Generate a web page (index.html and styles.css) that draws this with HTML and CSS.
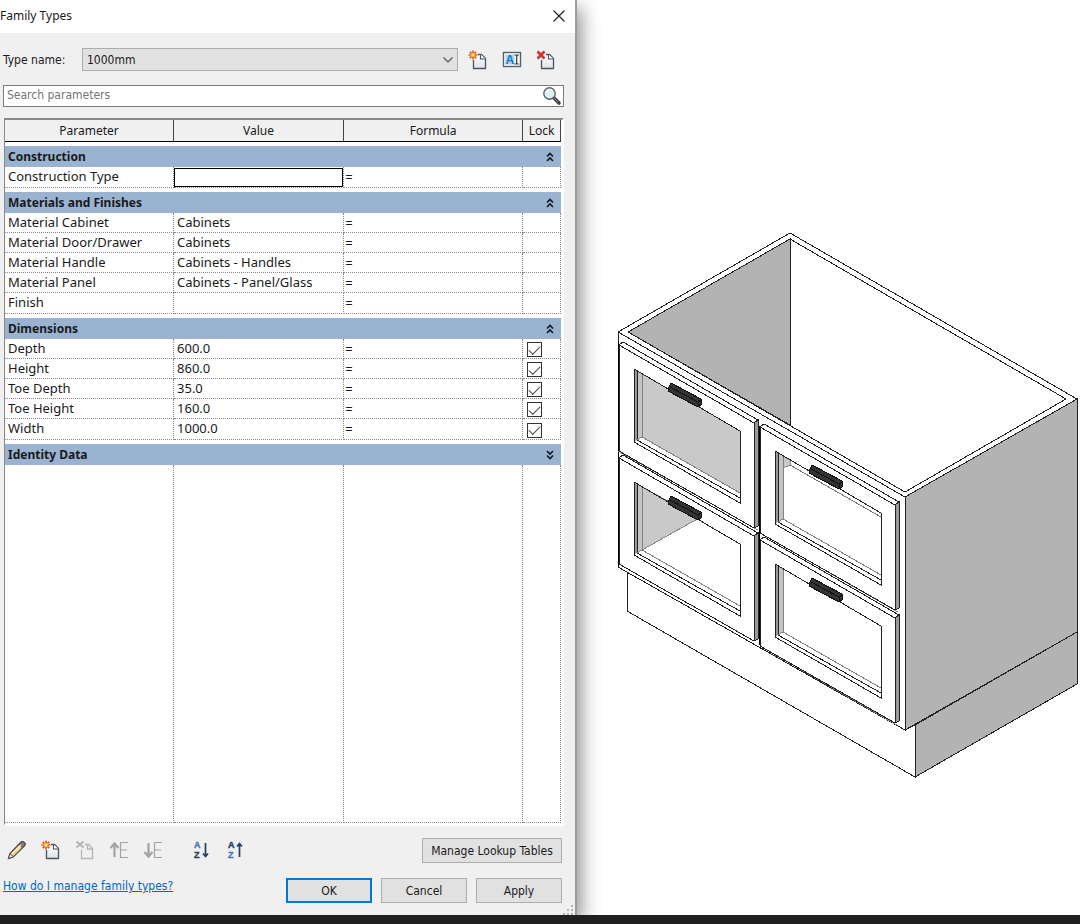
FILE: index.html
```html
<!DOCTYPE html>
<html lang="en">
<head>
<meta charset="utf-8">
<meta name="viewport" content="width=device-width, initial-scale=1">
<title>Family Types</title>
<link rel="stylesheet" href="styles.css">
</head>
<body>
<svg class="defs" aria-hidden="true">
  <defs>
    <linearGradient id="paper" x1="0" y1="0" x2="0" y2="1"><stop offset="0" stop-color="#fff"/><stop offset="1" stop-color="#dfe3e8"/></linearGradient>
    <symbol id="page" viewBox="0 0 20 20">
      <path d="M5.500 10V18.500H17.500V8.500L13.500 4.500H10" fill="url(#paper)" stroke="#4b535d" stroke-width="1.300" stroke-linejoin="round"/>
      <path d="M12.500 4.500V9H17.500" fill="#fff" stroke="#4b535d" stroke-width="1.100"/>
    </symbol>
    <symbol id="new" viewBox="0 0 20 20">
      <use href="#page"/>
      <path d="M5 0.500V9.500M0.500 5H9.500M1.800 1.800L8.200 8.200M8.200 1.800L1.800 8.200" stroke="#e8501c" stroke-width="1.700"/>
      <circle cx="5" cy="5" r="2" fill="#fff3a0" stroke="#f5a51d"/>
    </symbol>
    <symbol id="chev" viewBox="0 0 8 10"><path d="M1 4.500L4 1.500L7 4.500M1 9L4 6L7 9" fill="none" stroke="#101820" stroke-width="1.600"/></symbol>
  </defs>
</svg>
<div class="screen">
  <main class="workspace">
    <section class="dialog" aria-label="Family Types">
      <header class="titlebar">
        <h1 class="title">Family Types</h1>
        <button class="icon-button" type="button" aria-label="Close"><svg class="close" viewBox="0 0 12 12"><path d="M.5.5l11 11M11.500.5l-11 11" stroke="#222" stroke-width="1.200"/></svg></button>
      </header>
      <div class="content">
        <div class="type-row">
          <label for="type">Type name:</label>
          <div class="select-wrap">
            <select id="type" class="type-select"><option>1000mm</option></select>
            <svg class="select-arrow" viewBox="0 0 10 6"><path d="M.5.5L5 5L9.500.5" fill="none" stroke="#555" stroke-width="1.200"/></svg>
          </div>
          <div class="type-actions">
            <button class="icon-button" type="button" aria-label="New type"><svg class="icon"><use href="#new"/></svg></button>
            <button class="icon-button" type="button" aria-label="Rename type"><svg class="icon" viewBox="0 0 20 20"><rect x="1.500" y="2.500" width="17" height="14" fill="#fff" stroke="#56606b" stroke-width="1.400"/><rect x="3.500" y="4.500" width="9" height="10" fill="#a8d4f3"/><text class="a-glyph" x="3.500" y="14">A</text><path d="M12.500 5h1.500l.7.6.8-.6H17M14.700 5.500v8M12.500 14h1.500l.7-.6.8.6H17" fill="none" stroke="#333" stroke-width="1.200"/></svg></button>
            <button class="icon-button" type="button" aria-label="Delete type"><svg class="icon" viewBox="0 0 20 20"><use href="#page"/><path d="M1.500 1.500l7 7M8.500 1.500l-7 7" stroke="#c9342c" stroke-width="2.600"/></svg></button>
          </div>
        </div>
        <div class="search">
          <input class="search-input" type="search" placeholder="Search parameters" aria-label="Search parameters">
          <button class="icon-button" type="button" aria-label="Search"><svg class="icon" viewBox="0 0 20 20"><path d="M11.500 11.500L17 17" stroke="#444" stroke-width="3.600" stroke-linecap="round"/><path d="M12 12l4 4" stroke="#888" stroke-width="1"/><circle cx="7.500" cy="7.500" r="5.700" fill="#dff1f3" stroke="#59656a" stroke-width="1.400"/><path d="M4.500 7a3.200 3.200 0 0 1 3-3" fill="none" stroke="#fff" stroke-width="1.500"/></svg></button>
        </div>
        <div class="grid-frame">
          <table class="grid">
            <colgroup><col class="c-name"><col class="c-value"><col class="c-formula"><col class="c-lock"></colgroup>
            <thead><tr><th>Parameter</th><th>Value</th><th>Formula</th><th>Lock</th></tr></thead>
            <tbody>
              <tr class="group"><th colspan="4"><div class="group-bar">Construction<button class="icon-button toggle" type="button" aria-label="Collapse Construction"><svg class="chev"><use href="#chev"/></svg></button></div></th></tr>
              <tr class="end current"><td>Construction Type</td><td><input class="cell-input" type="text" aria-label="Construction Type"></td><td>=</td><td></td></tr>
            </tbody>
            <tbody>
              <tr class="group"><th colspan="4"><div class="group-bar">Materials and Finishes<button class="icon-button toggle" type="button" aria-label="Collapse Materials and Finishes"><svg class="chev"><use href="#chev"/></svg></button></div></th></tr>
              <tr><td>Material Cabinet</td><td>Cabinets</td><td>=</td><td></td></tr>
              <tr><td>Material Door/Drawer</td><td>Cabinets</td><td>=</td><td></td></tr>
              <tr><td>Material Handle</td><td>Cabinets - Handles</td><td>=</td><td></td></tr>
              <tr><td>Material Panel</td><td>Cabinets - Panel/Glass</td><td>=</td><td></td></tr>
              <tr class="end"><td>Finish</td><td></td><td>=</td><td></td></tr>
            </tbody>
            <tbody>
              <tr class="group"><th colspan="4"><div class="group-bar">Dimensions<button class="icon-button toggle" type="button" aria-label="Collapse Dimensions"><svg class="chev"><use href="#chev"/></svg></button></div></th></tr>
              <tr><td>Depth</td><td>600.0</td><td>=</td><td><input class="lock" type="checkbox" checked aria-label="Lock Depth"></td></tr>
              <tr><td>Height</td><td>860.0</td><td>=</td><td><input class="lock" type="checkbox" checked aria-label="Lock Height"></td></tr>
              <tr><td>Toe Depth</td><td>35.0</td><td>=</td><td><input class="lock" type="checkbox" checked aria-label="Lock Toe Depth"></td></tr>
              <tr><td>Toe Height</td><td>160.0</td><td>=</td><td><input class="lock" type="checkbox" checked aria-label="Lock Toe Height"></td></tr>
              <tr class="end"><td>Width</td><td>1000.0</td><td>=</td><td><input class="lock" type="checkbox" checked aria-label="Lock Width"></td></tr>
            </tbody>
            <tbody class="rest">
              <tr class="group"><th colspan="4"><div class="group-bar">Identity Data<button class="icon-button toggle" type="button" aria-label="Expand Identity Data"><svg class="chev flipped"><use href="#chev"/></svg></button></div></th></tr>
              <tr class="filler"><td></td><td></td><td></td><td></td></tr>
            </tbody>
          </table>
        </div>
        <div class="tool-row">
          <div class="tools">
            <button class="icon-button" type="button" aria-label="Edit parameter"><svg class="icon" viewBox="0 0 20 20"><path d="M1.500 18.500L3 13.500L13.500 2.500Q15 .8 17 2.200Q19 4 17.500 5.800L6.500 16.800Z" fill="#e9cf8f" stroke="#4d4a45" stroke-width="1.200"/><path d="M13.500 2.500Q15 .8 17 2.200Q19 4 17.500 5.800L15.500 7.700L11.700 4.400Z" fill="#8b7775" stroke="#4d4a45"/><path d="M4.500 14.500L14 5" stroke="#fff4cb" stroke-width="1.300"/><path d="M1.500 18.500L3 13.500L6.500 16.800Z" fill="#f5eee0" stroke="#4d4a45"/></svg></button>
            <button class="icon-button" type="button" aria-label="New parameter"><svg class="icon"><use href="#new"/></svg></button>
            <button class="icon-button" type="button" aria-label="Delete parameter" disabled><svg class="icon" viewBox="0 0 20 20" fill="none" stroke="#b5b5b5"><path d="M6.500 10V18.500H17.500V8.500L13.500 4.500H10M12.500 4.500V9H17.500" stroke-width="1.300"/><path d="M1.500 1.500l7 6M8.500 1.500l-7 6" stroke-width="2"/></svg></button>
            <button class="icon-button" type="button" aria-label="Move up" disabled><svg class="icon" viewBox="0 0 20 20" fill="none" stroke="#a3a3a3"><path d="M5.500 17V4M1.500 8L5.500 3.500L9.500 8" stroke-width="2.200"/><path d="M19 2.500H11.500V17.500H19M11.500 10H18" stroke-width="1.200"/></svg></button>
            <button class="icon-button" type="button" aria-label="Move down" disabled><svg class="icon" viewBox="0 0 20 20" fill="none" stroke="#a3a3a3"><path d="M5.500 3V16M1.500 12L5.500 16.500L9.500 12" stroke-width="2.200"/><path d="M19 2.500H11.500V17.500H19M11.500 10H18" stroke-width="1.200"/></svg></button>
            <button class="icon-button sort" type="button" aria-label="Sort ascending"><svg class="icon" viewBox="0 0 20 20"><text class="sort-glyph light" x="3" y="8">A</text><text class="sort-glyph dark" x="3" y="18">Z</text><path d="M14.500 3V16M12 13.500L14.500 16.500L17 13.500" fill="none" stroke="#263e63" stroke-width="1.700"/></svg></button>
            <button class="icon-button" type="button" aria-label="Sort descending"><svg class="icon" viewBox="0 0 20 20"><text class="sort-glyph dark" x="3" y="8">A</text><text class="sort-glyph light" x="3" y="18">Z</text><path d="M14.500 17V4M12 6.500L14.500 3.500L17 6.500" fill="none" stroke="#263e63" stroke-width="1.700"/></svg></button>
          </div>
          <button class="button wide" type="button">Manage Lookup Tables</button>
        </div>
        <footer class="footer">
          <a class="help" href="#help">How do I manage family types?</a>
          <div class="actions">
            <button class="button primary" type="submit">OK</button>
            <button class="button" type="button">Cancel</button>
            <button class="button" type="button">Apply</button>
          </div>
        </footer>
      </div>
      <svg class="grip" viewBox="0 0 11 11" fill="#b4b4b4" aria-hidden="true"><path d="M8 1h2v2H8zM8 5h2v2H8zM8 9h2v2H8zM4 5h2v2H4zM4 9h2v2H4zM0 9h2v2H0z"/></svg>
    </section>
    <section class="view" aria-label="3D view">
      <svg class="model" viewBox="577 0 503 915" role="img" aria-label="Cabinet with four glazed drawers">
        <defs>
          <g id="door">
            <path d="M619 345L623 342L758 420V526L754 528L619 451Z" fill="#fff"/>
            <path d="M754 423L758 420V526L754 528Z" fill="#999"/>
            <path d="M619 451V345L623 342L758 420V526L754 528M619 345L754 423V528M619 451L754 528"/>
          </g>
          <g id="frame">
            <path d="M634 369L638 372V439L634 442Z" fill="#999" stroke="none"/>
            <path d="M638 372L642 374V437L638 439Z" fill="#c4c4c4" stroke="none"/>
            <path d="M637 371V440L740 498"/>
            <path d="M642 374V437L740 493M642 437L637 440" stroke="#808080"/>
            <path d="M634 369L740 431V503L634 442Z"/>
          </g>
          <g id="handle">
            <path d="M668 389L671 383L701 399V405L698 407L668 391Z" fill="#333" stroke="#111"/>
            <path d="M670 387L698 402V406M698 402L701 400" stroke="#111"/>
          </g>
        </defs>
        <g fill="none" stroke="#222" stroke-width="1" shape-rendering="crispEdges">
          <path d="M618 332L790 233L1077 399L905 497Z" fill="#fff"/>
          <path d="M628 332L790 239V425Z" fill="#b3b3b3"/>
          <path d="M628 332L790 239L1066 399L905 492Z"/>
          <path d="M905 497L1077 399V632L905 730Z" fill="#b3b3b3"/>
          <path d="M915 725L1077 632V684L915 777Z" fill="#b3b3b3"/>
          <path d="M627 571V611L915 777V725L905 730Z" fill="#fff"/>
          <path d="M618 332L905 497V730L618 567Z" fill="#fff"/>
          <path d="M618 343V566M759 426V645" stroke="#000"/>
          <path d="M618 451L758 530M760 533L898 612M760 646L897 725" stroke="#888"/>
          <use href="#door"/><use href="#door" y="113"/><use href="#door" x="141" y="82"/><use href="#door" x="141" y="195"/>
          <path d="M642 374L740 431V493L642 437Z" fill="#c9c9c9" stroke="none"/>
          <path d="M642 487L699 518L642 550Z" fill="#c9c9c9" stroke="#888"/>
          <path d="M783 456L790 460V465L783 468Z" fill="#c9c9c9" stroke="#888"/>
          <path d="M790 465L881 517" stroke="#777"/>
          <use href="#frame"/><use href="#frame" y="113"/><use href="#frame" x="141" y="82"/><use href="#frame" x="141" y="195"/>
          <use href="#handle"/><use href="#handle" y="113"/><use href="#handle" x="141" y="82"/><use href="#handle" x="141" y="195"/>
        </g>
      </svg>
    </section>
  </main>
  <div class="bottom-bar"></div>
</div>
</body>
</html>
```
FILE: styles.css
```css
* { box-sizing: border-box; }
body { margin: 0; background: #fff; color: #1a1a1a; font: 12px/16px "DejaVu Sans Condensed", "Noto Sans", sans-serif; }
button, input, select { font: inherit; color: inherit; }
.defs { position: absolute; width: 0; height: 0; }
.screen { display: flex; flex-direction: column; min-height: 100vh; overflow: hidden; }
.workspace { flex: 1; display: grid; grid-template-columns: 577fr 503fr; }
.bottom-bar { height: 9px; background: #202020; }

.dialog { position: relative; z-index: 1; display: flex; flex-direction: column; background: #f0f0f0; border-right: 2px solid #9c9c9c; box-shadow: 4px 8px 18px rgba(0, 0, 0, .45); clip-path: inset(0 -40px 0 0); }
.titlebar { display: flex; justify-content: space-between; align-items: center; height: 33px; padding: 0 10px 2px 0; background: #fff; }
.title { margin: 0; font: 12px/16px "Noto Sans", sans-serif; }
.icon-button { display: grid; place-items: center; padding: 0; border: 0; background: none; }
.close { width: 12px; height: 12px; }
.icon { display: block; width: 20px; height: 20px; overflow: visible; }
.content { flex: 1; display: flex; flex-direction: column; padding: 15px 11px 12px 3px; }

.type-row { display: flex; align-items: center; }
.type-row label { flex: 0 0 79px; }
.select-wrap { position: relative; flex: 1; }
.type-select { display: block; width: 100%; height: 23px; padding: 0 4px; border: 1px solid #adadad; border-radius: 0; background: #e1e1e1; appearance: none; }
.select-arrow { position: absolute; right: 5px; top: 9px; width: 10px; height: 6px; pointer-events: none; }
.type-actions { display: flex; gap: 14px; padding: 0 8px 0 10px; }

.search { display: flex; margin-top: 14px; height: 22px; padding-right: 1px; border: 1px solid #7a7a7a; background: #fff; }
.search-input { flex: 1; min-width: 0; padding: 0 3px 2px; border: 0; background: none; outline: 0; }
.search-input::placeholder { color: #757575; opacity: 1; }

.grid-frame { flex: 1; display: grid; margin: 11px 0 0 1px; border: 1px solid #888; border-width: 2px 0 0 1px; padding-right: 1px; border-right: 2px solid #fff; border-bottom: 3px solid #fff; background: #fff; }
.grid { width: 100%; height: 100%; table-layout: fixed; border-collapse: separate; border-spacing: 0; font: 13px/16px "Noto Sans", sans-serif; }
.c-name { width: 30.400%; }
.c-value { width: 30.600%; }
.c-formula { width: 32.200%; }
.grid th, .grid td { padding: 0; text-align: left; }
.grid thead th { height: 22px; border-right: 1px solid #444; border-bottom: 1px solid #000; background: #f0f0f0; font-size: 12px; font-weight: 400; text-align: center; }
.group th { height: 25px; padding-top: 4px; }
.group-bar { display: flex; justify-content: space-between; align-items: center; height: 21px; padding: 0 7px 0 3px; background: #99b3d1; font-size: 12px; font-weight: 700; }
.chev { display: block; width: 8px; height: 10px; }
.flipped { transform: scaleY(-1); }
.grid td { height: 20px; padding-bottom: 2px; border-right: 1px dotted #888; border-bottom: 1px dotted #888; }
.grid td:first-child, .grid td:nth-child(2) { padding-left: 3px; }
.grid td:nth-child(3) { padding-left: 1px; }
.grid td:nth-child(n+3) { padding-bottom: 0; }
.grid .end td { height: 21px; }
.grid .current td:nth-child(2) { padding: 0; }
.cell-input { display: block; width: 100%; height: 19px; padding: 0 3px; border: 1px solid #000; background: #fff; outline: 0; }
.rest, .filler, .grid .filler td { height: 100%; }
.lock { display: grid; place-items: center; appearance: none; width: 15px; height: 15px; margin: 2px 0 0 4px; border: 1px solid #333; background: #fff; }
.lock:checked::before { content: ""; width: 10px; height: 5px; border: solid #444; border-width: 0 0 1px 1px; transform: translateY(-1px) rotate(-45deg); }

.tool-row { display: flex; justify-content: space-between; align-items: center; margin-top: 12px; padding-right: 2px; }
.tools { display: flex; gap: 14px; padding: 0 0 2px 4px; }
.sort { margin-left: 14px; }
.button { min-width: 86px; height: 25px; padding: 0 5px; border: 1px solid #adadad; background: #e1e1e1; white-space: nowrap; }
.wide { min-width: 140px; }
.primary { border: 2px solid #0078d7; }
.footer { display: flex; justify-content: space-between; margin-top: 15px; padding-right: 2px; }
.help { color: #0066cc; }
.actions { display: flex; gap: 9px; }
.grip { position: absolute; right: 1px; bottom: 0; width: 11px; height: 11px; }
.a-glyph { font: 700 12px "Liberation Sans", sans-serif; fill: #1975bd; }
.sort-glyph { font: 700 9px/10px "Liberation Sans", sans-serif; stroke-width: .4px; }
.light { fill: #5079ad; stroke: #5079ad; }
.dark { fill: #263e63; stroke: #263e63; }

.view { min-width: 0; }
.model { display: block; width: 100%; }
```
